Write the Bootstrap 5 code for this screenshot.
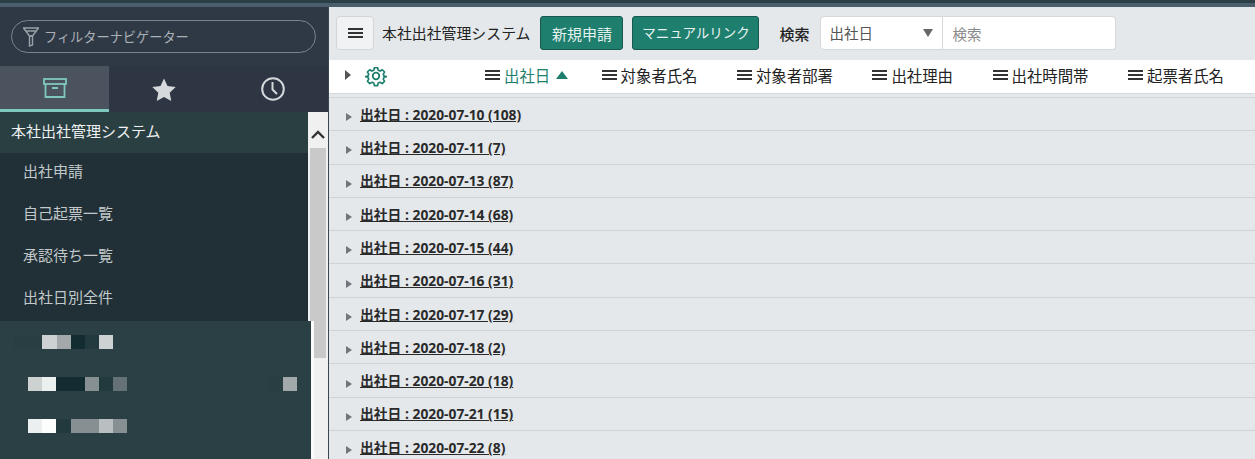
<!DOCTYPE html>
<html lang="ja">
<head>
  <meta charset="UTF-8" />
  <title>本社出社管理システム</title>
  <meta name="viewport" content="width=device-width, initial-scale=1.0"/>
  <link rel="stylesheet" href="https://cdn.jsdelivr.net/npm/bootstrap@5.3.3/dist/css/bootstrap.min.css"/>
  <style>
    html, body { height: 459px; overflow: hidden; }
    body {
      background: #e4e8eb;
      color: #222;
      font-family: "Noto Sans CJK JP", "Liberation Sans", sans-serif;
      font-size: 14px;
    }
    .top-strip { height: 7px; background: linear-gradient(#2a4046 0 3px, #4a5e6c 3px); }
    .app-shell { height: 452px; }

    /* side panel */
    .side-panel { width: 329px; background: #2f3945; border-right: 1px solid #3a4650; }
    .filter-wrap { height: 59px; padding: 13px 12px 0 11px; }
    .filter-pill {
      height: 33px; border: 1px solid #7b858e; border-radius: 17px;
      color: #a9b0b6; font-size: 13.2px; padding-left: 10px; gap: 4px;
    }
    .side-tabs { height: 46px; background: #2d3642; }
    .side-tab { width: 109px; }
    .side-tab.is-on { background: #4b535e; border-bottom: 3px solid #7fc8bd; }
    .side-body { height: 347px; }
    .side-col { width: 308px; }
    .side-title { height: 41px; background: #2a3f42; color: #eef0f1; padding: 0 0 2px 11px; font-size: 15px; }
    .side-item { height: 42px; background: #203036; color: #c3c8ca; padding: 0 0 5px 23px; font-size: 15px; }
    .side-lower {
      height: 138px; width: 314px; background: #2b4044; padding-top: 14px;
      border-right: 3px solid #fafafa; position: relative; z-index: 1;
    }
    .mosaic-row { height: 14px; margin-bottom: 28px; }
    .mosaic-row > span { width: 14.2px; height: 14px; display: block; }
    .mosaic-gap { margin-right: auto; }
    .m-a { background: #cdd1d1; } .m-b { background: #a3a9aa; } .m-c { background: #122c32; }
    .m-d { background: #223a3e; } .m-e { background: #ecefef; } .m-f { background: #fcfdfd; }
    .m-g { background: #869092; } .m-h { background: #647276; } .m-i { background: #b9bfc0; }
    .m-j { background: #293e42; }
    .row-one { padding-left: 14px; }
    .row-two { padding-left: 28px; padding-right: 14px; }
    .row-three { padding-left: 28px; }
    .scroll-rail { width: 20px; background: #f0f0f0; }
    .scroll-up { height: 36px; padding-top: 9px; }
    .scroll-thumb { height: 210px; width: 16px; background: #c9c9c9; margin-left: 2px; }

    /* main */
    .main-area { background: #e4e8eb; min-width: 0; }
    .tool-bar { height: 53px; padding: 9px 0 10px 7px; }
    .menu-btn {
      width: 38px; height: 34px; background: #f1f2f4; border: 1px solid #d3d6d9;
      border-radius: 4px; padding: 0;
    }
    .app-name { font-size: 14.9px; margin: 0 10px 0 8px; color: #222; white-space: nowrap; }
    .btn-teal {
      background: #1f7f6e; border: 1px solid #17594e; color: #e6f2f0; height: 34px;
      width: 83px; font-size: 15px; padding: 0; border-radius: 3px; line-height: 1;
    }
    .btn-teal:hover { background: #1f7f6e; color: #fff; border-color: #17594e; }
    .btn-manual { margin-left: 9px; width: 127px; font-size: 13.5px; }
    .search-label { margin: 0 11px 0 20px; font-size: 15px; font-weight: 500; }
    .search-pick {
      width: 123px; height: 34px; background: #fff; border: 1px solid #d5d8da;
      border-radius: 4px 0 0 4px; padding: 0 9px 0 8px; color: #555; font-size: 14.5px;
    }
    .search-pick i { width: 0; height: 0; border: 5px solid transparent; border-top: 8px solid #666; border-bottom: 0; }
    .search-input {
      width: 173px; height: 34px; border: 1px solid #d5d8da; border-left: 0;
      border-radius: 0 4px 4px 0; font-size: 14.5px; padding: 0 9px; color: #555;
    }
    .search-input::placeholder { color: #8a8a8a; }
    .head-row { height: 34px; background: #fff; border-bottom: 1px solid #d6d9dc; padding: 0 0 2px 16px; font-size: 15.4px; color: #222; }
    .head-gear { margin: 0 0 0 14px; width: 120px; }
    .head-cols { gap: 39.5px; }
    .head-col { gap: 4px; }
    .head-col.is-sorted { width: 77px; color: #1f7f6e; white-space: nowrap; }
    .ham { width: 15px; height: 10px; flex: none; border-top: 2px solid #333; border-bottom: 2px solid #333; position: relative; }
    .ham::after { content: ""; position: absolute; left: 0; right: 0; top: 2px; height: 2px; background: #333; }
    .sort-up { width: 0; height: 0; border: 6px solid transparent; border-bottom: 8px solid #1f7f6e; border-top: 0; margin-left: 2px; flex: none; }
    .gap-band { height: 4px; background: #e4e8eb; border-bottom: 1px solid #d3d6d9; }
    .group-row { height: 33.3px; border-bottom: 1px solid #cfd3d6; padding-left: 17px; }
    .group-arrow { width: 0; height: 0; border: 4px solid transparent; border-left: 6px solid #70777c; border-right: 0; margin: 6px 8px 0 0; flex: none; }
    .head-arrow { width: 0; height: 0; border: 5px solid transparent; border-left: 6px solid #555; border-right: 0; margin-top: -2px; }
    .group-link {
      color: #2a2a2a; font-size: 13.8px; text-decoration: underline; font-weight: 700; margin: 2px 0 0 0;
      font-family: "Open Sans", "Noto Sans CJK JP", sans-serif;
    }
  </style>
</head>
<body>
  <div class="top-strip"></div>
  <div class="app-shell d-flex">

    <div class="side-panel flex-shrink-0">
      <div class="filter-wrap">
        <div class="filter-pill d-flex align-items-center">
          <svg width="18" height="24" viewBox="0 0 18 24" fill="none" stroke="#99a1a8" stroke-width="1.4"><path d="M1 3h16M1.5 3l6 8h3l6-8M4 6h10"/><path d="M7.5 11h3v9l-3 1z"/></svg>
          <span>フィルターナビゲーター</span>
        </div>
      </div>
      <div class="side-tabs d-flex">
        <div class="side-tab is-on d-flex align-items-center justify-content-center">
          <svg width="24" height="20" viewBox="0 0 24 20" fill="none" stroke="#7fc8bd" stroke-width="1.8"><rect x="1" y="1" width="22" height="5"/><path d="M2.5 6v13h19V6M9 10h6"/></svg>
        </div>
        <div class="side-tab d-flex align-items-center justify-content-center">
          <svg width="24" height="23" viewBox="0 0 24 23" fill="#d5d9dc"><path d="M12 0.5l3.500 7.600 8.200 1-6 5.700 1.600 8.200-7.300-4.100-7.300 4.100 1.600-8.200-6-5.700 8.200-1z"/></svg>
        </div>
        <div class="side-tab d-flex align-items-center justify-content-center">
          <svg width="24" height="24" viewBox="0 0 24 24" fill="none" stroke="#d5d9dc" stroke-width="2"><circle cx="12" cy="12" r="10.8"/><path d="M11.5 5v7.500l4.500 4.500"/></svg>
        </div>
      </div>
      <div class="side-body d-flex">
        <div class="side-col flex-shrink-0">
          <div class="side-title d-flex align-items-center">本社出社管理システム</div>
          <div class="side-item d-flex align-items-center">出社申請</div>
          <div class="side-item d-flex align-items-center">自己起票一覧</div>
          <div class="side-item d-flex align-items-center">承認待ち一覧</div>
          <div class="side-item d-flex align-items-center">出社日別全件</div>
          <div class="side-lower">
            <div class="mosaic-row row-one d-flex">
              <span class="m-j"></span><span class="m-j"></span><span class="m-a"></span><span class="m-b"></span><span class="m-c"></span><span class="m-d"></span><span class="m-a"></span>
            </div>
            <div class="mosaic-row row-two d-flex">
              <span class="m-a"></span><span class="m-e"></span><span class="m-c"></span><span class="m-c"></span><span class="m-g"></span><span class="m-d"></span><span class="m-h mosaic-gap"></span><span class="m-j"></span><span class="m-b"></span>
            </div>
            <div class="mosaic-row row-three d-flex">
              <span class="m-e"></span><span class="m-f"></span><span class="m-d"></span><span class="m-g"></span><span class="m-g"></span><span class="m-i"></span><span class="m-g"></span>
            </div>
          </div>
        </div>
        <div class="scroll-rail">
          <div class="scroll-up d-flex align-items-center justify-content-center">
            <svg width="14" height="9" viewBox="0 0 14 9" fill="none" stroke="#333" stroke-width="2.4"><path d="M1 8l6-6 6 6"/></svg>
          </div>
          <div class="scroll-thumb"></div>
        </div>
      </div>
    </div>

    <div class="main-area flex-grow-1">
      <div class="tool-bar d-flex align-items-center">
        <button class="menu-btn btn d-flex align-items-center justify-content-center"><span class="ham"></span></button>
        <span class="app-name lh-1">本社出社管理システム</span>
        <button class="btn btn-teal">新規申請</button>
        <button class="btn btn-teal btn-manual">マニュアルリンク</button>
        <span class="search-label lh-1">検索</span>
        <div class="search-pick d-flex align-items-center justify-content-between"><span>出社日</span><i></i></div>
        <input class="search-input" type="text" placeholder="検索">
      </div>
      <div class="head-row d-flex align-items-center">
        <span class="head-arrow"></span>
        <span class="head-gear d-flex">
          <svg width="22" height="22" viewBox="0 0 24 24" fill="none" stroke="#1f7f6e" stroke-width="2" stroke-linejoin="round"><circle cx="12" cy="12" r="3.6"/><path d="M10 2h4l.6 3 2.400 1 2.600-1.600 2.800 2.800-1.600 2.600 1 2.400 3 .6v0l-3 .6-1 2.400 1.600 2.600-2.800 2.800-2.600-1.600-2.400 1-.6 3h-4l-.6-3-2.400-1-2.600 1.600-2.800-2.800 1.600-2.600-1-2.400-3-.6v0l3-.6 1-2.400L1.600 7.200l2.800-2.800L7 6l2.400-1z" transform="translate(1.2 1.2) scale(.9)"/></svg>
        </span>
        <div class="head-cols d-flex">
          <span class="head-col is-sorted d-flex align-items-center"><span class="ham"></span>出社日<span class="sort-up"></span></span>
          <span class="head-col d-flex align-items-center"><span class="ham"></span>対象者氏名</span>
          <span class="head-col d-flex align-items-center"><span class="ham"></span>対象者部署</span>
          <span class="head-col d-flex align-items-center"><span class="ham"></span>出社理由</span>
          <span class="head-col d-flex align-items-center"><span class="ham"></span>出社時間帯</span>
          <span class="head-col d-flex align-items-center"><span class="ham"></span>起票者氏名</span>
        </div>
      </div>
      <div class="gap-band"></div>
      <div class="group-row d-flex align-items-center"><span class="group-arrow"></span><a class="group-link" href="#">出社日 : 2020-07-10 (108)</a></div>
      <div class="group-row d-flex align-items-center"><span class="group-arrow"></span><a class="group-link" href="#">出社日 : 2020-07-11 (7)</a></div>
      <div class="group-row d-flex align-items-center"><span class="group-arrow"></span><a class="group-link" href="#">出社日 : 2020-07-13 (87)</a></div>
      <div class="group-row d-flex align-items-center"><span class="group-arrow"></span><a class="group-link" href="#">出社日 : 2020-07-14 (68)</a></div>
      <div class="group-row d-flex align-items-center"><span class="group-arrow"></span><a class="group-link" href="#">出社日 : 2020-07-15 (44)</a></div>
      <div class="group-row d-flex align-items-center"><span class="group-arrow"></span><a class="group-link" href="#">出社日 : 2020-07-16 (31)</a></div>
      <div class="group-row d-flex align-items-center"><span class="group-arrow"></span><a class="group-link" href="#">出社日 : 2020-07-17 (29)</a></div>
      <div class="group-row d-flex align-items-center"><span class="group-arrow"></span><a class="group-link" href="#">出社日 : 2020-07-18 (2)</a></div>
      <div class="group-row d-flex align-items-center"><span class="group-arrow"></span><a class="group-link" href="#">出社日 : 2020-07-20 (18)</a></div>
      <div class="group-row d-flex align-items-center"><span class="group-arrow"></span><a class="group-link" href="#">出社日 : 2020-07-21 (15)</a></div>
      <div class="group-row d-flex align-items-center"><span class="group-arrow"></span><a class="group-link" href="#">出社日 : 2020-07-22 (8)</a></div>
    </div>
  </div>
  <script src="https://cdn.jsdelivr.net/npm/bootstrap@5.3.3/dist/js/bootstrap.bundle.min.js"></script>
</body>
</html>
